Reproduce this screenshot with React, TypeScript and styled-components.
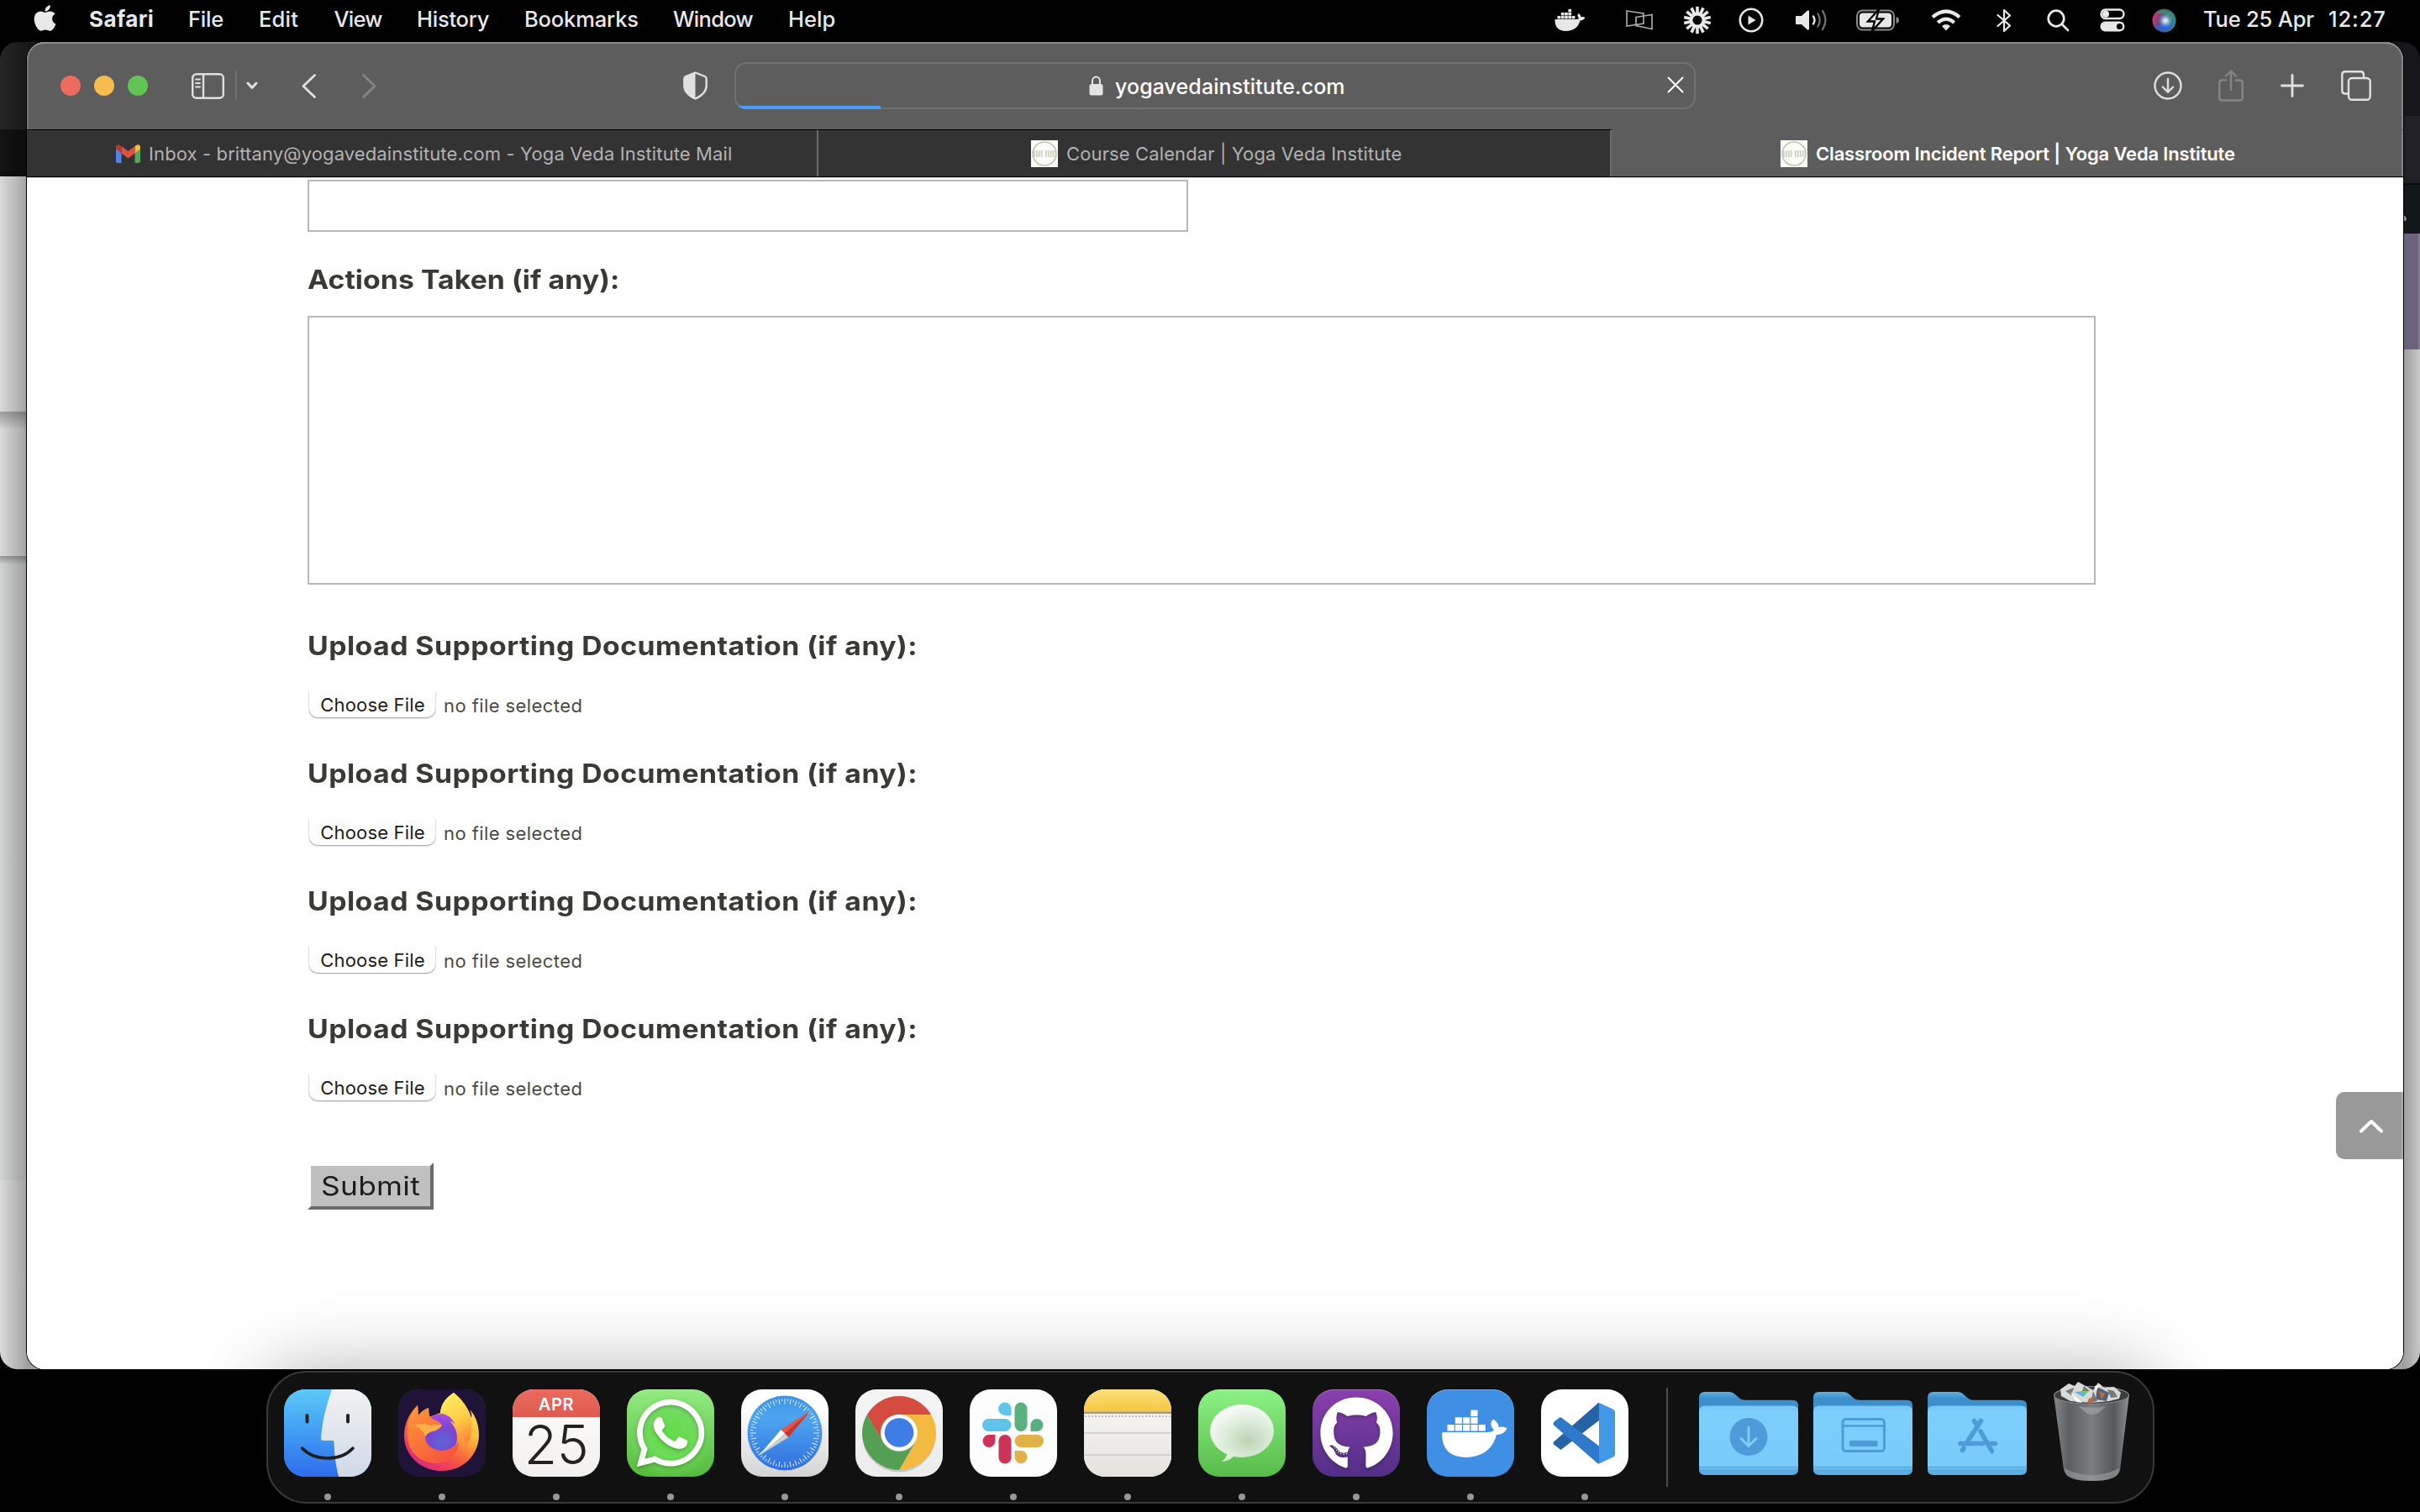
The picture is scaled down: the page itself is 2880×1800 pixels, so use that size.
import React from 'react';
import styled, { createGlobalStyle } from 'styled-components';
import { FaApple, FaGithub, FaWhatsapp } from 'react-icons/fa';

const GlobalStyle = createGlobalStyle`
  * { box-sizing: border-box; }
  html, body { margin: 0; padding: 0; background: #000; }
  body { font-family: Inter, "Liberation Sans", sans-serif; overflow: hidden; }
  svg { display: block; flex: none; }
`;

const Desktop = styled.div`
  position: relative;
  width: 2880px;
  height: 1800px;
  overflow: hidden;
  background: #000;
`;

/* ---------- menu bar ---------- */

const MenuBar = styled.header`
  display: flex;
  align-items: center;
  height: 50px;
  padding: 0 0 4px 36px;
  color: #e8e8e8;
`;

const AppleMark = styled.span`
  display: flex;
  width: 70px;
  padding-bottom: 4px;
`;

const MenuItem = styled.span<{ $width: number; $track?: number; $strong?: boolean }>`
  flex: 0 0 ${(p) => p.$width}px;
  font-size: ${(p) => (p.$strong ? 26 : 25.5)}px;
  font-weight: ${(p) => (p.$strong ? 700 : 500)};
  letter-spacing: ${(p) => p.$track ?? 0}px;
  line-height: 46px;
  white-space: nowrap;
`;

const StatusArea = styled.div`
  display: flex;
  align-items: center;
  margin-left: auto;
`;

const StatusIcon = styled.span<{ $width: number }>`
  display: flex;
  flex: 0 0 ${(p) => p.$width}px;
  padding-top: 2px;
`;

/* ---------- windows ---------- */

const BackWindow = styled.div<{ $side: 'left' | 'right' }>`
  position: absolute;
  top: 50px;
  ${(p) => p.$side}: 0;
  display: flex;
  flex-direction: column;
  width: 400px;
  height: 1580px;
  border-radius: 21px;
  overflow: hidden;
`;

const Band = styled.div<{ $height?: number; $fill: string }>`
  flex: ${(p) => (p.$height ? `0 0 ${p.$height}px` : '1 1 0')};
  background: ${(p) => p.$fill};
`;

const MenuDot = styled.div`
  width: 7px;
  height: 7px;
  margin: 36px 0 0 377px;
  border-radius: 0 5px 2px 0;
  background: #8a8d8e;
`;

const SafariWindow = styled.main`
  position: absolute;
  top: 50px;
  left: 32px;
  display: flex;
  flex-direction: column;
  width: 2828px;
  height: 1580px;
  border-radius: 21px;
  overflow: hidden;
  background: #fff;
  box-shadow: 0 0 0 1px #000;
`;

const Toolbar = styled.div`
  display: flex;
  align-items: center;
  flex: 0 0 104px;
  padding-left: 40px;
  background: #5d5d5d;
  border-radius: 21px 21px 0 0;
  box-shadow: inset 0 2px 0 #8c8c8c, inset 2px 0 0 #757575, inset -2px 0 0 #858585;
`;

const Light = styled.span<{ $fill: string }>`
  width: 24px;
  height: 24px;
  margin-right: 16px;
  border-radius: 50%;
  background: ${(p) => p.$fill};
`;

const ToolIcon = styled.span<{ $gap: number; $dim?: boolean }>`
  display: flex;
  margin-left: ${(p) => p.$gap}px;
  color: ${(p) => (p.$dim ? '#858585' : '#e0e0e0')};
`;

const ToolDivider = styled.span`
  width: 2px;
  height: 36px;
  margin-left: 13px;
  background: #6f6f6f;
`;

const AddressField = styled.div`
  position: relative;
  display: flex;
  align-items: center;
  width: 1144px;
  height: 56px;
  margin-left: 32px;
  padding: 0 12px 0 420px;
  border: 2px solid #717171;
  border-radius: 14px;
  color: #fff;
`;

const Address = styled.span`
  margin-left: 14px;
  padding-top: 1px;
  font-size: 25px;
  font-weight: 500;
  letter-spacing: 0.08px;
`;

const StopButton = styled.span`
  margin-left: auto;
  margin-top: -3px;
`;

const Progress = styled.span`
  position: absolute;
  inset: -2px;
  border-radius: 14px;
  overflow: hidden;
  &::after {
    content: '';
    position: absolute;
    left: 0;
    bottom: 0;
    width: 174px;
    height: 4px;
    background: #4a9ff8;
  }
`;

const TabStrip = styled.nav`
  display: flex;
  flex: 0 0 58px;
  border-bottom: 1px solid #d0d0d0;
`;

const Tab = styled.div<{ $width: number; $lead: number; $active?: boolean }>`
  display: flex;
  align-items: center;
  flex: 0 0 ${(p) => p.$width}px;
  padding-left: ${(p) => p.$lead}px;
  border-top: 1px solid ${(p) => (p.$active ? '#5d5d5d' : '#000')};
  border-bottom: 1px solid #000;
  background: ${(p) => (p.$active ? '#5d5d5d' : '#333')};
  box-shadow: inset -2px 0 0 ${(p) => (p.$active ? '#858585' : '#6c6c6c')};
  color: ${(p) => (p.$active ? '#fff' : '#b2b2b2')};
  font-size: 22px;
  font-weight: ${(p) => (p.$active ? 600 : 400)};
  letter-spacing: ${(p) => (p.$active ? -0.16 : 0.12)}px;
  white-space: nowrap;
`;

const TabLabel = styled.span`
  margin-left: 10px;
  padding-top: 1px;
`;

/* ---------- page ---------- */

const Page = styled.form`
  display: flex;
  flex-direction: column;
  align-items: flex-start;
  flex: 1;
  margin: 0;
  padding: 2px 0 0 334px;
  background: #fff;
  color: #3a3a35;
`;

const TextField = styled.div`
  width: 1048px;
  height: 62px;
  margin-bottom: 37px;
  border: 2px solid #b8b8b8;
`;

const TextArea = styled.div`
  width: 2128px;
  height: 320px;
  margin: 23px 0 53px;
  border: 2px solid #b8b8b8;
`;

const FieldLabel = styled.label<{ $track: number }>`
  font-size: 31px;
  font-weight: 700;
  line-height: 40px;
  letter-spacing: ${(p) => p.$track}px;
  white-space: nowrap;
  transform: scaleX(1.09);
  transform-origin: left;
`;

const FileRow = styled.div`
  display: flex;
  align-items: center;
  height: 32px;
  margin: 33px 0 47px 2px;
`;

const FileButton = styled.button`
  width: 150px;
  height: 32px;
  padding: 3px 0 0 1px;
  border: 0;
  border-radius: 0 0 10px 10px;
  background: #fff;
  box-shadow: 0 1px 2px rgba(0, 0, 0, 0.4), 0 0 1px rgba(0, 0, 0, 0.2);
  color: #1c1c1c;
  font: 400 22px/29px Inter, sans-serif;
  letter-spacing: 0.18px;
  clip-path: inset(0 -4px -6px -4px);
`;

const FileStatus = styled.span`
  margin-left: 10px;
  padding-top: 4px;
  font-size: 22px;
  line-height: 30px;
  letter-spacing: 0.42px;
  color: #4a4a46;
`;

const Submit = styled.button`
  width: 150px;
  height: 56px;
  margin-top: 27px;
  padding: 0;
  border: 4px solid;
  border-color: #fff #6b6b6b #6b6b6b #fff;
  background: #c0c0c0;
  color: #1c1c1c;
`;

const SubmitText = styled.span`
  display: block;
  font: 400 31px/46px Inter, sans-serif;
  letter-spacing: 0.25px;
  transform: scaleX(1.14);
`;

const ScrollTop = styled.div`
  position: absolute;
  right: 0;
  top: 1250px;
  display: grid;
  place-items: center;
  width: 80px;
  height: 80px;
  padding-left: 2px;
  border-radius: 10px 0 0 10px;
  background: #999;
  box-shadow: inset -2px 0 0 #aaa;
`;

/* ---------- dock ---------- */

const DockBar = styled.footer`
  position: absolute;
  left: 317px;
  top: 1632px;
  display: flex;
  width: 2247px;
  height: 158px;
  padding: 20px 0 0 3px;
  border: 2px solid #3a3a3a;
  border-radius: 48px;
  background: #111;
  box-shadow: 0 0 0 2px #000, 0 10px 90px 10px rgba(0, 0, 0, 0.3);
`;

const DockSlot = styled.div`
  display: flex;
  flex-direction: column;
  align-items: center;
  flex: 0 0 136px;
`;

const RunningDot = styled.span`
  width: 8px;
  height: 8px;
  margin-top: 20px;
  border-radius: 50%;
  background: #979797;
`;

const AppTile = styled.div<{ $fill: string }>`
  display: flex;
  flex-direction: column;
  align-items: center;
  width: 104px;
  height: 104px;
  border-radius: 25px;
  overflow: hidden;
  background: ${(p) => p.$fill};
  box-shadow: inset 0 1px 0 rgba(255, 255, 255, 0.25);
`;

const LogoFrame = styled.div<{ $size: number; $top: number }>`
  display: flex;
  margin-top: ${(p) => p.$top}px;
  color: #fff;
  font-size: ${(p) => p.$size}px;
  filter: drop-shadow(0 2px 2px rgba(0, 0, 0, 0.25));
`;

const Month = styled.div`
  width: 104px;
  height: 33px;
  background: linear-gradient(#ee6a5f, #dc5a50);
  color: #fff;
  font-size: 20px;
  font-weight: 600;
  line-height: 36px;
  letter-spacing: 0.7px;
  text-align: center;
`;

const DayNumber = styled.div`
  font-size: 64px;
  font-weight: 300;
  line-height: 66px;
  letter-spacing: -0.3px;
  color: #222;
`;

const DockDivider = styled.span`
  width: 2px;
  height: 118px;
  margin: -2px 28px 0 29px;
  background: #4b4b4b;
`;

const FolderSlot = styled(DockSlot)`
  padding-top: 3px;
`;

const TrashSlot = styled(DockSlot)`
  margin-top: -10px;
`;

/* ---------- icons ---------- */

const CRATES = [
  [24.5, 42], [33.8, 42], [43.1, 42], [52.4, 42], [61.7, 42],
  [33.8, 33.3], [43.1, 33.3], [52.4, 33.3], [52.4, 24.6],
];

const Whale = () => (
  <g fill="currentColor">
    {CRATES.map(([x, y], i) => <rect key={i} x={x} y={y} width="8.1" height="7.5" />)}
    <path d="M18 53 Q18 51 20 51 H72 Q78 51 80 48.5 Q73 41 79 35.5 Q86 40 85.5 45 Q92 43.5 95.5 46.5 Q92 54 83 54 Q76 80.5 46 81 Q18 80 18 53Z" />
  </g>
);

const DockerStatus = () => (
  <svg width="37" height="30" viewBox="17 23 80 60"><Whale /></svg>
);

const ScreensIcon = () => (
  <svg width="32" height="24" viewBox="0 0 32 24" fill="none" stroke="#a8a8a8" strokeWidth="1.7">
    <path d="M1 1 L21 4 V16 L1 19Z" /><path d="M12 8.500 L31 5.500 V22.500 L12 18.500Z" />
  </svg>
);

const BurstIcon = () => (
  <svg width="34" height="34" viewBox="-17 -17 34 34" stroke="currentColor" strokeWidth="3.6">
    {Array.from({ length: 14 }, (_, i) => (
      <line key={i} x1="0" y1="-6" x2="0" y2="-16.2" transform={`rotate(${(i * 360) / 14})`} />
    ))}
    <circle r="7.6" fill="none" strokeWidth="4" />
  </svg>
);

const PlayIcon = () => (
  <svg width="30" height="30" viewBox="0 0 30 30" fill="none" stroke="currentColor" strokeWidth="2.6">
    <circle cx="15" cy="15" r="13.2" /><path d="M11.5 9.5 L20.5 15 L11.5 20.5Z" fill="currentColor" stroke="none" />
  </svg>
);

const VolumeIcon = () => (
  <svg width="40" height="28" viewBox="0 0 40 28" fill="none" strokeWidth="2.4" strokeLinecap="round">
    <path d="M1 10 Q1 9 2 9 H8 L15 2.5 Q17 1.500 17 4 V24 Q17 26.500 15 25.500 L8 19 H2 Q1 19 1 18Z" fill="currentColor" />
    <path d="M22 9.500 Q25 14 22 18.500" stroke="currentColor" />
    <path d="M27.500 6.500 Q32 14 27.500 21.500" stroke="#6b6b6b" />
    <path d="M33 3 Q40 14 33 25" stroke="#6b6b6b" />
  </svg>
);

const BatteryIcon = () => (
  <svg width="51" height="26" viewBox="0 0 51 26">
    <rect x="1" y="1.500" width="44" height="23" rx="6.500" fill="none" stroke="#8b8b8b" strokeWidth="2" />
    <path d="M47.500 9 Q51 10 51 13 Q51 16 47.500 17Z" fill="#8b8b8b" />
    <rect x="4" y="4.500" width="38" height="17" rx="4" fill="currentColor" />
    <path d="M27 0 L14 14.500 H22 L19 26 L32 11.500 H24Z" fill="currentColor" stroke="#000" strokeWidth="2.400" />
  </svg>
);

const WifiIcon = () => (
  <svg width="36" height="26" viewBox="0 0 36 26" fill="none" stroke="currentColor" strokeWidth="4.200">
    <path d="M2 9.500 Q18 -4.500 34 9.500" /><path d="M8.200 15.800 Q18 7.500 27.800 15.800" />
    <path d="M18 25.500 L13 20 Q18 16 23 20Z" fill="currentColor" stroke="none" />
  </svg>
);

const BluetoothIcon = () => (
  <svg width="18" height="29" viewBox="0 0 18 29" fill="none" stroke="currentColor" strokeWidth="2.200" strokeLinejoin="round" strokeLinecap="round">
    <path d="M1.500 8 L16 20.500 L9 27 V2 L16 8.500 L1.500 21" />
  </svg>
);

const SearchIcon = () => (
  <svg width="27" height="27" viewBox="0 0 27 27" fill="none" stroke="currentColor" strokeWidth="2.700" strokeLinecap="round">
    <circle cx="11" cy="11" r="9.300" /><path d="M18 18 L25 25" />
  </svg>
);

const ControlIcon = () => (
  <svg width="30" height="28" viewBox="0 0 30 28" fill="none" stroke="currentColor" strokeWidth="2.400">
    <rect x="1.500" y="1.500" width="27" height="10.500" rx="5.200" /><circle cx="7" cy="6.800" r="4" fill="currentColor" stroke="none" />
    <rect x="0.500" y="15.500" width="29" height="12" rx="6" fill="currentColor" stroke="none" />
    <circle cx="23.500" cy="21.500" r="3.600" fill="#000" stroke="none" />
  </svg>
);

const SiriIcon = () => (
  <svg width="29" height="29" viewBox="0 0 29 29">
    <defs>
      <radialGradient id="siriGlow"><stop offset="0" stopColor="#fff" /><stop offset="0.35" stopColor="#bfe6f5" stopOpacity="0.8" /><stop offset="1" stopColor="#7fb8ff" stopOpacity="0" /></radialGradient>
      <linearGradient id="siriBase" x1="0" y1="0.3" x2="1" y2="0.6"><stop offset="0" stopColor="#d2396a" /><stop offset="0.45" stopColor="#4a4a7c" /><stop offset="1" stopColor="#2a8fa4" /></linearGradient>
    </defs>
    <circle cx="14.500" cy="14.500" r="14" fill="url(#siriBase)" />
    <path d="M5 5 Q14 -2 23 5 Q28 10 26 14 Q18 6 5 5Z" fill="#3c8c6c" opacity="0.9" />
    <path d="M4 22 Q12 16 24 21 Q15 32 4 22Z" fill="#2f66d8" opacity="0.9" />
    <circle cx="16" cy="14.500" r="8.500" fill="url(#siriGlow)" />
  </svg>
);

const SidebarIcon = () => (
  <svg width="39" height="31" viewBox="0 0 39 31" fill="none" stroke="currentColor" strokeWidth="2.400">
    <rect x="1.200" y="1.200" width="36.600" height="28.600" rx="4.500" /><path d="M14 1 V30" />
    <path d="M5 7.500 H10 M5 12 H10 M5 16.500 H10" strokeWidth="1.900" strokeLinecap="round" />
  </svg>
);

const Chevron = ({ d, w, h, sw }: { d: string; w: number; h: number; sw: number }) => (
  <svg width={w} height={h} viewBox={`0 0 ${w} ${h}`} fill="none" stroke="currentColor" strokeWidth={sw} strokeLinecap="round" strokeLinejoin="round">
    <path d={d} />
  </svg>
);

const ShieldIcon = () => (
  <svg width="29" height="34" viewBox="0 0 29 34">
    <path d="M14.500 1.500 L26 6 Q27.700 6.700 27.700 9 V17 C27.700 25 21 29.500 14.500 32.500 C8 29.500 1.300 25 1.300 17 V9 Q1.300 6.700 3 6Z" fill="none" stroke="currentColor" strokeWidth="2.400" />
    <path d="M14.500 1 L3 6 Q1 7 1 9 V17 C1 25 8 30 14.500 33Z" fill="currentColor" />
  </svg>
);

const LockIcon = () => (
  <svg width="17" height="24" viewBox="0 0 17 24">
    <path d="M4 11 V6.500 A4.500 5 0 0 1 13 6.500 V11" fill="none" stroke="#e4e4e4" strokeWidth="2" />
    <rect x="0.500" y="10" width="16" height="13.500" rx="2.500" fill="#e4e4e4" />
  </svg>
);

const DownloadIcon = () => (
  <svg width="34" height="34" viewBox="0 0 34 34" fill="none" stroke="currentColor" strokeWidth="2.400" strokeLinecap="round" strokeLinejoin="round">
    <circle cx="17" cy="17" r="15.500" /><path d="M17 9 V24.500 M10.800 18.500 L17 24.700 L23.200 18.500" />
  </svg>
);

const ShareIcon = () => (
  <svg width="30" height="38" viewBox="0 0 30 38" fill="none" stroke="currentColor" strokeWidth="2.400" strokeLinecap="round" strokeLinejoin="round">
    <path d="M9 12.500 H4.500 Q1.300 12.500 1.300 15.500 V33.500 Q1.300 36.500 4.500 36.500 H25.500 Q28.700 36.500 28.700 33.500 V15.500 Q28.700 12.500 25.500 12.500 H21" />
    <path d="M15 24 V2 M9 7.500 L15 1.500 L21 7.500" />
  </svg>
);

const TabsIcon = () => (
  <svg width="36" height="36" viewBox="0 0 36 36" fill="none" stroke="currentColor" strokeWidth="2.400">
    <path d="M9 27.500 H5 Q1.300 27.500 1.300 24 V5 Q1.300 1.300 5 1.300 H23.500 Q27 1.300 27 5 V9" />
    <rect x="9" y="9" width="25.700" height="25.700" rx="4" />
  </svg>
);

const GmailIcon = () => (
  <svg width="29" height="22" viewBox="0 0 29 22">
    <path d="M0 4 V20 Q0 22 2 22 H6.500 V8.500Z" fill="#4f86ec" /><path d="M29 4 V20 Q29 22 27 22 H22.500 V8.500Z" fill="#58a55c" />
    <path d="M22.500 2 L25 0.600 Q29 -0.500 29 3.500 V5 L22.500 10.500Z" fill="#f2bd42" />
    <path d="M6.500 10.500 V2 L14.500 8 L22.500 2 V10.500 L14.500 16.500Z" fill="#dd5144" />
    <path d="M6.500 2 L4 0.600 Q0 -0.500 0 3.500 V5 L6.500 10.500Z" fill="#b8372b" />
  </svg>
);

const SiteIcon = () => (
  <svg width="32" height="32" viewBox="0 0 32 32">
    <rect width="32" height="32" fill="#fdfdfb" />
    <circle cx="16" cy="16" r="14" fill="none" stroke="#b9c8a8" strokeWidth="1.500" />
    <path d="M3 16 H14.500 M17 16 H29" stroke="#cbd3c2" strokeWidth="8" strokeDasharray="1.8 1.1" />
  </svg>
);

const FinderIcon = () => (
  <svg width="104" height="104" viewBox="0 0 104 104">
    <defs>
      <linearGradient id="finderL" x2="0" y2="1"><stop stopColor="#5ccaf8" /><stop offset="0.55" stopColor="#3f97f3" /><stop offset="1" stopColor="#2d6cec" /></linearGradient>
      <linearGradient id="finderR" x2="0" y2="1"><stop stopColor="#f2f2f3" /><stop offset="1" stopColor="#d0d9e6" /></linearGradient>
    </defs>
    <rect width="104" height="104" fill="url(#finderL)" />
    <path d="M57 0 C50 20 45 40 44 58 Q44 61 47 61 H58 Q59.500 61 59.500 63 C60 80 62 92 65 104 H104 V0Z" fill="url(#finderR)" />
    <path d="M27.500 31 V38.500 M76 31 V38.500" stroke="#222" strokeWidth="4" strokeLinecap="round" />
    <path d="M21.500 70 Q33 82 52 82 Q71 82 82 70" fill="none" stroke="#1d1f25" strokeWidth="3.500" strokeLinecap="round" />
  </svg>
);

const FirefoxIcon = () => (
  <svg width="104" height="104" viewBox="0 0 104 104">
    <defs>
      <linearGradient id="foxBody" x1="0.8" y1="0.05" x2="0.25" y2="0.95">
        <stop stopColor="#ffe75e" /><stop offset="0.35" stopColor="#ffc03c" /><stop offset="0.6" stopColor="#f9733b" /><stop offset="0.82" stopColor="#f04353" /><stop offset="1" stopColor="#d92a7c" />
      </linearGradient>
      <linearGradient id="foxFace" x1="0" y1="0" x2="0.8" y2="1"><stop stopColor="#ff9a35" /><stop offset="1" stopColor="#f5523f" /></linearGradient>
      <linearGradient id="foxTail" x2="0.3" y2="1"><stop stopColor="#fff06a" /><stop offset="0.6" stopColor="#ffcf45" /><stop offset="1" stopColor="#fb8a3c" /></linearGradient>
      <radialGradient id="globe" cx="0.5" cy="0.75" r="0.8"><stop stopColor="#5a66d8" /><stop offset="0.5" stopColor="#7a45cf" /><stop offset="1" stopColor="#b44de6" /></radialGradient>
    </defs>
    <rect width="104" height="104" fill="#1f1338" />
    <path d="M66 4 C75 11 83 21 87 34 Q88 29 85 24 C93 32 96 44 96 55 C95 80 76 97 52 97 C27 97 7 79 7 55 C7 40 14 27 23 19 L24 31 Q28 25 36 22 L37 33 L50 28 Q51 14 66 4Z" fill="url(#foxBody)" />
    <circle cx="52" cy="51" r="22" fill="url(#globe)" />
    <path d="M66 4 C76 13 84 22 87 36 Q89 58 78 70 Q80 60 77 55 Q74 66 68 68 Q74 52 62 38 Q64 38 68 42 Q62 30 50 28 Q51 13 66 4Z" fill="url(#foxTail)" />
    <path d="M23 19 L24 31 Q28 25 36 22 Q34 29 40 35 Q50 38 52 43 Q47 49 40 50 Q32 53 32 58 Q33 72 51 73 Q64 73 72 63 Q70 84 48 88 Q22 88 13 67 Q5 40 23 19Z" fill="url(#foxFace)" />
    <path d="M19 43 Q26 39 39 43 Q46 41 52 43 Q47 49 40 50 Q34 52 32 56 Q30 48 19 43Z" fill="#ffb04b" />
  </svg>
);

const SafariIcon = () => (
  <svg width="104" height="104" viewBox="-52 -52 104 104">
    <defs><linearGradient id="compass" x2="0" y2="1"><stop stopColor="#3d93e3" /><stop offset="0.3" stopColor="#4da5ee" /><stop offset="1" stopColor="#2f6fe0" /></linearGradient></defs>
    <circle r="44.500" fill="url(#compass)" />
    {Array.from({ length: 72 }, (_, i) => (
      <line key={i} y1={i % 2 ? -38 : -34.500} y2="-41" stroke="#e3effb" strokeWidth="1" transform={`rotate(${i * 5})`} />
    ))}
    <path d="M-31 27 L4.500 5 L-1 0 Z" fill="#cfcfcf" /><path d="M-31 27 L-4.500 -4 L0 0 Z" fill="#fff" />
    <path d="M31 -27 L4.500 5 L0 0 Z" fill="#c8372c" /><path d="M31 -27 L-4.500 -4 L0 0 Z" fill="#ec5245" />
  </svg>
);

const CHROME_SECTOR = 'M52 30 H90.100 A44 44 0 0 0 13.900 30 L32.950 63 A22 22 0 0 1 52 30Z';
const ChromeIcon = () => (
  <svg width="104" height="104" viewBox="0 0 104 104">
    <circle cx="52" cy="55" r="43.500" fill="#000" opacity="0.15" />
    <path d={CHROME_SECTOR} fill="#f3ba42" transform="rotate(120 52 52)" />
    <path d={CHROME_SECTOR} fill="#539f54" transform="rotate(240 52 52)" />
    <path d={CHROME_SECTOR} fill="#d54b3d" />
    <circle cx="52" cy="51.500" r="21.700" fill="#fff" /><circle cx="52" cy="51.500" r="17.300" fill="#3e7ce6" />
  </svg>
);

const SlackIcon = () => (
  <svg width="104" height="104" viewBox="0 0 104 104">
    <g fill="#5fc3ea"><rect x="15" y="35" width="34.500" height="15" rx="7.500" /><path d="M49.500 31 H42 A7.700 7.700 0 1 1 49.500 23.300Z" /></g>
    <g fill="#58b17f"><rect x="53.500" y="15.500" width="15" height="34.500" rx="7.500" /><path d="M72.500 50 V42.500 A7.500 7.500 0 1 1 80 50Z" /></g>
    <g fill="#cd3359"><rect x="34.500" y="54" width="15" height="34.500" rx="7.500" /><path d="M30.500 54 V61.500 A7.500 7.500 0 1 1 23 54Z" /></g>
    <g fill="#e2b24a"><rect x="53.500" y="54" width="34.500" height="15" rx="7.500" /><path d="M53.500 73 H61 A7.600 7.600 0 1 1 53.500 80.500Z" /></g>
  </svg>
);

const NotesIcon = () => (
  <svg width="104" height="104" viewBox="0 0 104 104">
    <defs>
      <linearGradient id="noteTop" x2="0" y2="1"><stop stopColor="#fbe07c" /><stop offset="1" stopColor="#f7c63e" /></linearGradient>
      <linearGradient id="notePaper" x2="0" y2="1"><stop stopColor="#fbfaf9" /><stop offset="1" stopColor="#e5e2dd" /></linearGradient>
    </defs>
    <rect width="104" height="104" fill="url(#notePaper)" /><rect width="104" height="26.500" fill="url(#noteTop)" />
    <rect y="26.500" width="104" height="2.500" fill="#a79a7d" />
    <path d="M1 32 H104" stroke="#bdbdbd" strokeWidth="2" strokeDasharray="2 2" />
    <path d="M0 52 H104 M0 78 H104" stroke="#d4d3d3" strokeWidth="1.800" />
  </svg>
);

const MessagesIcon = () => (
  <svg width="104" height="104" viewBox="0 0 104 104">
    <defs><radialGradient id="bubble" cx="0.6" cy="0.68" r="0.75"><stop stopColor="#bcd4b6" /><stop offset="0.45" stopColor="#d9ebd6" /><stop offset="1" stopColor="#fff" /></radialGradient></defs>
    <path d="M35 74 Q34 82 27.500 86 Q36 86 43 79Z" fill="#d9f2d4" />
    <ellipse cx="52" cy="49.500" rx="38" ry="31.500" fill="url(#bubble)" />
  </svg>
);

const DockerIcon = () => <svg width="104" height="104" viewBox="0 0 104 104" color="#fff"><Whale /></svg>;

const CodeIcon = () => (
  <svg width="104" height="104" viewBox="0 0 104 104">
    <path d="M66 18 Q67 16 69 16 V37 L23.500 72 L15 65.500 Q14 64 15 62.500Z" fill="#2464a5" />
    <path d="M22 33.500 L15 39 Q14 41 15 42.500 L66 87 Q67 88.500 69 88.500 V67.500 L24 33.500 Q23 33 22 33.500Z" fill="#2c7ac9" />
    <path d="M69 16 L86 23.800 Q88 25 88 27 V77.500 Q88 79.500 86 80.500 L69 88.500Z" fill="#4199e8" />
  </svg>
);

const FolderIcon = ({ children }: { children: React.ReactNode }) => (
  <svg width="118" height="99" viewBox="0 0 118 99">
    <defs>
      <linearGradient id="folderBack" x2="0" y2="1"><stop stopColor="#5fb2e4" /><stop offset="0.2" stopColor="#3c8fca" /></linearGradient>
      <linearGradient id="folderFront" x2="0" y2="1"><stop stopColor="#76c7f4" /><stop offset="0.1" stopColor="#7ccefb" /><stop offset="0.86" stopColor="#79ccfa" /><stop offset="0.9" stopColor="#67b9ea" /><stop offset="1" stopColor="#56a9de" /></linearGradient>
    </defs>
    <path d="M0 7 Q0 0 7 0 H36 Q40 0 43 3 L48 7.500 Q51 9.800 55 9.800 H111 Q118 9.800 118 16 V40 H0Z" fill="url(#folderBack)" />
    <path d="M0 23 Q0 16.500 7 16.500 H111 Q118 16.500 118 23 V92 Q118 99 111 99 H7 Q0 99 0 92Z" fill="url(#folderFront)" />
    <path d="M0 89.500 H118 M0 94 H118" stroke="#4f9fd4" strokeWidth="0.800" />
    {children}
  </svg>
);

const TrashIcon = () => (
  <svg width="90" height="119" viewBox="0 0 90 119">
    <defs><linearGradient id="can"><stop stopColor="#85888a" /><stop offset="0.2" stopColor="#5c5f61" /><stop offset="0.5" stopColor="#7b7e80" /><stop offset="0.8" stopColor="#56595b" /><stop offset="1" stopColor="#8e9193" /></linearGradient></defs>
    <path d="M0 16 Q12 28 45 28 Q78 28 90 16 L79 106 Q76 119 46 119 Q16 119 12 106Z" fill="url(#can)" />
    <ellipse cx="45" cy="17" rx="44.500" ry="10.500" fill="#3a3d3e" stroke="#808486" strokeWidth="1.200" />
    <path d="M8 10 L18 3 L25 6 L29 1 L40 7 L47 11 L53 2 L60 8 L72 7 L80 14 L78 21 L66 24 L45 26 L20 24 L9 18Z" fill="#d9d9d7" />
    <path d="M14 12 L24 8 L21 17Z M36 6 L43 12 L34 12Z M64 10 L72 12 L76 19 L68 20Z M47 12 L52 24 L44 26Z" fill="#77787a" />
    <path d="M25 13 L42 12 L35 19Z" fill="#58b9d6" /><path d="M32 12 L42 12 L38 15Z" fill="#8fc45a" />
    <path d="M52 7 L66 14 L63 24 L50 22Z" fill="#52607c" /><path d="M54 12 L61 15 L57 23Z M42 21 L47 19 L46 27 L40 26Z" fill="#bd6a3c" />
    <path d="M20 13 L34 26 L27 25Z M56 4 L50 12 L49 6Z" fill="#fff" />
    <path d="M30 30 Q46 50 62 30 Q46 33 30 30Z" fill="#c9cbcb" opacity="0.35" />
    <path d="M13 104 Q45 120 78 104 L77 110 Q72 119 46 119 Q18 119 14 110Z" fill="#a4a7a8" opacity="0.5" />
  </svg>
);

/* ---------- content ---------- */

const MENUS = [
  { label: 'Safari', width: 118, track: 0.4, strong: true },
  { label: 'File', width: 84, track: -0.2 },
  { label: 'Edit', width: 89.5, track: 0.2 },
  { label: 'View', width: 98.5, track: -0.8 },
  { label: 'History', width: 128, track: -0.25 },
  { label: 'Bookmarks', width: 177, track: -0.15 },
  { label: 'Window', width: 137, track: -0.7 },
  { label: 'Help', width: 60 },
];

const STATUS: [React.FC, number][] = [
  [DockerStatus, 85], [ScreensIcon, 68], [BurstIcon, 66], [PlayIcon, 67], [VolumeIcon, 73], [BatteryIcon, 89],
  [WifiIcon, 78], [BluetoothIcon, 60], [SearchIcon, 63], [ControlIcon, 62], [SiriIcon, 61],
];

const UPLOADS = [1, 2, 3, 4];
const silver = 'linear-gradient(#fff 20%, #d4d4d4)';
const fromLeft = (near: string, far: string) => `linear-gradient(90deg, ${near}, ${far} 34px)`;

const Calendar = () => (<><Month>APR</Month><DayNumber>25</DayNumber></>);
const WhatsApp = () => <LogoFrame $size={92} $top={6}><FaWhatsapp /></LogoFrame>;
const GitHub = () => <LogoFrame $size={89} $top={8}><FaGithub /></LogoFrame>;

const APPS: [string, React.FC, string][] = [
  ['finder', FinderIcon, '#3f97f3'],
  ['firefox', FirefoxIcon, '#1f1338'],
  ['calendar', Calendar, 'linear-gradient(#fff, #f1f0ee)'],
  ['whatsapp', WhatsApp, 'radial-gradient(circle at 50% 55%, #5fdc48 0, #6cdb57 30%, transparent 65%), linear-gradient(#93ea82, #55bb3c)'],
  ['safari', SafariIcon, silver],
  ['chrome', ChromeIcon, 'linear-gradient(#f5f5f5, #ececec)'],
  ['slack', SlackIcon, '#fdfdfd'],
  ['notes', NotesIcon, '#f7f6f4'],
  ['messages', MessagesIcon, 'linear-gradient(#8cf285, #58bb4a)'],
  ['github', GitHub, 'linear-gradient(#8a40ae, #522f86)'],
  ['docker', DockerIcon, '#3f8fe5'],
  ['code', CodeIcon, '#fff'],
];

export default function App() {
  return (
    <Desktop>
      <GlobalStyle />
      <MenuBar>
        <AppleMark><FaApple size={35} /></AppleMark>
        {MENUS.map((m) => (
          <MenuItem key={m.label} $width={m.width} $track={m.track} $strong={m.strong}>{m.label}</MenuItem>
        ))}
        <StatusArea>
          {STATUS.map(([Icon, width], i) => <StatusIcon key={i} $width={width}><Icon /></StatusIcon>)}
          <MenuItem $width={149} $track={-0.2}>Tue 25 Apr</MenuItem>
          <MenuItem $width={109} $track={0.9}>12:27</MenuItem>
        </StatusArea>
      </MenuBar>

      <BackWindow $side="left">
        <Band $height={104} $fill="linear-gradient(90deg, #262626, #181818 34px)" />
        <Band $height={56} $fill="linear-gradient(90deg, #131313, #0c0c0c 34px)" />
        <Band $height={280} $fill={fromLeft('#dadada', '#9f9f9f')} />
        <Band $height={172} $fill={`linear-gradient(rgba(0,0,0,.28), transparent 22px), ${fromLeft('#dadada', '#9f9f9f')}`} />
        <Band $height={743} $fill={`linear-gradient(rgba(0,0,0,.28), transparent 10px), ${fromLeft('#d1d4d3', '#989b9a')}`} />
        <Band $fill={fromLeft('#dadada', '#9f9f9f')} />
      </BackWindow>

      <BackWindow $side="right">
        <Band $height={88} $fill="#17161b" />
        <Band $height={80} $fill="#222027" />
        <Band $height={2} $fill="#0a0a0a" />
        <Band $height={58} $fill="#12181a"><MenuDot /></Band>
        <Band $height={138} $fill="linear-gradient(270deg, #857d92 2px, #6c627d 2px)" />
        <Band $fill="linear-gradient(270deg, #c8c8c8, #a2a2a2 18px)" />
      </BackWindow>

      <SafariWindow>
        <Toolbar>
          <Light $fill="#ed6a5e" />
          <Light $fill="#f5bd4f" />
          <Light $fill="#61c454" />
          <ToolIcon $gap={36}><SidebarIcon /></ToolIcon>
          <ToolDivider />
          <ToolIcon $gap={11}><Chevron w={14} h={10} sw={3} d="M2 2 L7 7.500 L12 2" /></ToolIcon>
          <ToolIcon $gap={52}><Chevron w={17} h={29} sw={2.8} d="M15.500 1.500 L2 14.500 L15.500 27.500" /></ToolIcon>
          <ToolIcon $gap={55} $dim><Chevron w={17} h={29} sw={2.8} d="M1.500 1.500 L15 14.500 L1.500 27.500" /></ToolIcon>
          <ToolIcon $gap={365}><ShieldIcon /></ToolIcon>
          <AddressField>
            <LockIcon />
            <Address>yogavedainstitute.com</Address>
            <StopButton><Chevron w={20} h={20} sw={2} d="M1.500 1.500 L18.500 18.500 M18.500 1.500 L1.500 18.500" /></StopButton>
            <Progress />
          </AddressField>
          <ToolIcon $gap={545}><DownloadIcon /></ToolIcon>
          <ToolIcon $gap={43} $dim><ShareIcon /></ToolIcon>
          <ToolIcon $gap={44}><Chevron w={28} h={28} sw={2.8} d="M14 1.500 V26.500 M1.500 14 H26.500" /></ToolIcon>
          <ToolIcon $gap={44}><TabsIcon /></ToolIcon>
        </Toolbar>
        <TabStrip>
          <Tab $width={942} $lead={106}><GmailIcon /><TabLabel>Inbox - brittany@yogavedainstitute.com - Yoga Veda Institute Mail</TabLabel></Tab>
          <Tab $width={944} $lead={253}><SiteIcon /><TabLabel>Course Calendar | Yoga Veda Institute</TabLabel></Tab>
          <Tab $width={942} $lead={201} $active><SiteIcon /><TabLabel>Classroom Incident Report | Yoga Veda Institute</TabLabel></Tab>
        </TabStrip>
        <Page>
          <TextField />
          <FieldLabel $track={0.05}>Actions Taken (if any):</FieldLabel>
          <TextArea />
          {UPLOADS.map((n) => (
            <React.Fragment key={n}>
              <FieldLabel $track={0.42}>Upload Supporting Documentation (if any):</FieldLabel>
              <FileRow>
                <FileButton type="button">Choose File</FileButton>
                <FileStatus>no file selected</FileStatus>
              </FileRow>
            </React.Fragment>
          ))}
          <Submit type="button"><SubmitText>Submit</SubmitText></Submit>
        </Page>
        <ScrollTop>
          <svg width="30" height="18" viewBox="0 0 30 18" fill="none" stroke="#fff" strokeWidth="4" strokeLinecap="round" strokeLinejoin="round"><path d="M4 15.500 L16 4 L28 15.500" /></svg>
        </ScrollTop>
      </SafariWindow>

      <DockBar>
        {APPS.map(([name, Icon, fill]) => (
          <DockSlot key={name}><AppTile $fill={fill}><Icon /></AppTile><RunningDot /></DockSlot>
        ))}
        <DockDivider />
        <FolderSlot>
          <FolderIcon>
            <circle cx="59" cy="53.500" r="22.500" fill="#4d9bd8" />
            <path d="M59 42 V64 M50 55.500 L59 64.500 L68 55.500" fill="none" stroke="#7ccefb" strokeWidth="3" strokeLinecap="round" />
          </FolderIcon>
        </FolderSlot>
        <FolderSlot>
          <FolderIcon>
            <rect x="35" y="32.500" width="49.500" height="38" rx="4" fill="none" stroke="#4d9bd8" strokeWidth="3" />
            <path d="M35 40.500 H84" stroke="#4d9bd8" strokeWidth="2.500" /><rect x="43" y="58" width="33.500" height="7" rx="1.500" fill="#4d9bd8" />
          </FolderIcon>
        </FolderSlot>
        <FolderSlot>
          <FolderIcon>
            <path d="M55.500 34.500 L59.500 41 M63.500 34.500 L46 61.500 M41.500 69.500 L43 67 M39 61.500 H66 M76 61.500 H80.500 M63 47 L76.500 70.500" fill="none" stroke="#4d9bd8" strokeWidth="5.500" strokeLinecap="round" />
          </FolderIcon>
        </FolderSlot>
        <TrashSlot><TrashIcon /></TrashSlot>
      </DockBar>
    </Desktop>
  );
}
